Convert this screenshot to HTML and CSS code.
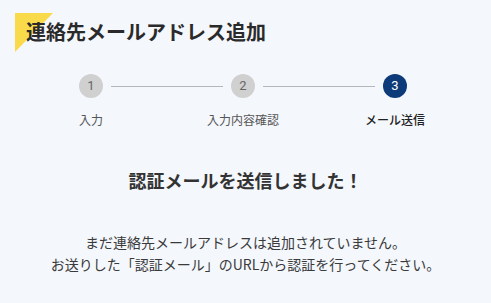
FILE: index.html
```html
<!DOCTYPE html>
<html lang="ja">
<head>
<meta charset="utf-8">
<title>連絡先メールアドレス追加</title>
<link rel="stylesheet" href="styles.css">
</head>
<body>
<main class="page">
  <header class="head">
    <h1 class="title">連絡先メールアドレス追加</h1>
  </header>
  <section class="steps">
    <div class="track">
      <span class="dot">1</span>
      <span class="line"></span>
      <span class="dot">2</span>
      <span class="line"></span>
      <span class="dot dot-active">3</span>
    </div>
    <div class="labels">
      <span class="label">入力</span>
      <span class="label">入力内容確認</span>
      <span class="label label-active">メール送信</span>
    </div>
  </section>
  <h2 class="done">認証メールを送信しました！</h2>
  <p class="msg">まだ連絡先メールアドレスは追加されていません。<br>お送りした「認証メール」のURLから認証を行ってください。</p>
</main>
</body>
</html>
```
FILE: styles.css
```css
html, body {
  margin: 0;
  padding: 0;
  background: #f4f7fc;
}
body {
  font-family: "Noto Sans CJK JP", "Noto Sans", sans-serif;
  color: #333333;
  width: 491px;
  height: 303px;
  overflow: hidden;
}
.page {
  display: flex;
  flex-direction: column;
}
.head {
  position: relative;
  padding: 18px 0 0 26px;
}
.head::before {
  content: "";
  position: absolute;
  left: 15px;
  top: 13px;
  width: 38px;
  height: 39px;
  background: #f9da4a;
  clip-path: polygon(0 0, 100% 0, 0 100%);
}
.title {
  position: relative;
  margin: 0;
  font-size: 20px;
  line-height: 28px;
  font-weight: 700;
  color: #2a2a2a;
}
.steps {
  margin: 28px 20px 0 15px;
  width: 456px;
}
.track {
  display: flex;
  align-items: center;
  padding: 0 64px;
}
.dot {
  width: 24px;
  height: 24px;
  border-radius: 50%;
  background: #d0d0d0;
  color: #666666;
  font-family: Roboto, "Noto Sans", sans-serif;
  font-size: 13px;
  line-height: 24px;
  text-align: center;
  flex: none;
}
.dot-active {
  background: #0d3b79;
  color: #ffffff;
}
.line {
  flex: 1;
  height: 1px;
  background: #b3b7be;
  margin: 0 8px;
}
.labels {
  display: grid;
  grid-template-columns: 1fr 1fr 1fr;
  margin-top: 13px;
}
.label {
  text-align: center;
  font-size: 12px;
  line-height: 18px;
  color: #555555;
}
.label-active {
  color: #222222;
  font-weight: 500;
}
.done {
  margin: 38px 0 0;
  text-align: center;
  font-size: 18px;
  line-height: 26px;
  font-weight: 700;
  color: #333333;
}
.msg {
  margin: 38px 0 0;
  text-align: center;
  font-size: 14px;
  line-height: 22px;
  color: #3a3a3a;
}
```
